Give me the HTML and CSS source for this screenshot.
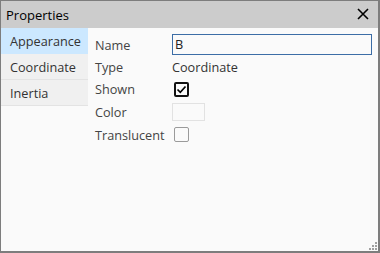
FILE: index.html
```html
<!DOCTYPE html>
<html>
<head>
<meta charset="utf-8">
<link rel="stylesheet" href="styles.css">
</head>
<body>
<div class="window">
  <div class="titlebar">
    <span class="title">Properties</span>
    <svg class="close" width="12" height="12" viewBox="0 0 12 12"><path d="M1 1 L11 11 M11 1 L1 11" stroke="#000" stroke-width="1.6" fill="none"/></svg>
  </div>
  <div class="main">
    <div class="tabs">
      <div class="tab selected">Appearance</div>
      <div class="tab">Coordinate</div>
      <div class="tab">Inertia</div>
    </div>
    <div class="content">
      <div class="grid">
        <div class="label">Name</div>
        <div class="value"><div class="input">B</div></div>
        <div class="label">Type</div>
        <div class="value">Coordinate</div>
        <div class="label">Shown</div>
        <div class="value"><span class="check on"><svg width="11" height="11" viewBox="0 0 11 11"><path d="M1.5 5.5 L4.3 8.3 L9.5 2.5" stroke="#000" stroke-width="1.7" fill="none"/></svg></span></div>
        <div class="label">Color</div>
        <div class="value"><span class="swatch"></span></div>
        <div class="label">Translucent</div>
        <div class="value"><span class="check off"></span></div>
      </div>
    </div>
  </div>
  <svg class="grip" width="9" height="9" viewBox="0 0 9 9">
    <rect x="7" y="1" width="2" height="2" fill="#a0a0a0"/>
    <rect x="4" y="4" width="2" height="2" fill="#a0a0a0"/>
    <rect x="7" y="4" width="2" height="2" fill="#a0a0a0"/>
    <rect x="1" y="7" width="2" height="2" fill="#a0a0a0"/>
    <rect x="4" y="7" width="2" height="2" fill="#a0a0a0"/>
    <rect x="7" y="7" width="2" height="2" fill="#a0a0a0"/>
  </svg>
</div>
</body>
</html>
```
FILE: styles.css
```css
html, body {
  margin: 0;
  padding: 0;
}
body {
  font-family: "Open Sans", "Noto Sans", sans-serif;
  font-size: 12.7px;
  color: #333;
}
.window {
  position: relative;
  width: 380px;
  height: 253px;
  box-sizing: border-box;
  border: 1px solid #7d7d7d;
  border-right-width: 2px;
  border-bottom-width: 2px;
  background: #fafafa;
  display: flex;
  flex-direction: column;
}
.titlebar {
  height: 27px;
  background: #cccccc;
  display: flex;
  align-items: center;
  justify-content: space-between;
  padding: 0 9px 0 5px;
  flex-shrink: 0;
}
.title {
  color: #000;
  font-size: 13px;
}
.close {
  display: block;
  margin-top: -2px;
}
.main {
  flex: 1;
  display: flex;
}
.tabs {
  width: 88px;
  display: flex;
  flex-direction: column;
}
.tab {
  height: 25px;
  line-height: 26px;
  padding-left: 9px;
  background: #f0f0f0;
  color: #333;
  border-bottom: 1px solid #e3e3e3;
}
.tab.selected {
  background: #cce8ff;
  border-bottom-color: #cce8ff;
}
.content {
  flex: 1;
  padding: 6px 6px 0 7px;
}
.grid {
  display: grid;
  grid-template-columns: 77px 200px;
  grid-template-rows: 21px 23px 22px 23px 23px;
  align-items: center;
}
.label {
  color: #444;
}
.value {
  display: flex;
  align-items: center;
}
.input {
  box-sizing: border-box;
  width: 200px;
  height: 21px;
  border: 1px solid #3c6da6;
  background: #fafafa;
  padding-left: 2px;
  line-height: 19px;
  color: #222;
}
.check {
  box-sizing: border-box;
  width: 15px;
  height: 15px;
  margin-left: 2px;
  border-radius: 2px;
  display: flex;
  align-items: center;
  justify-content: center;
}
.check.on {
  border: 2px solid #111;
}
.check.off {
  border: 1px solid #9a9a9a;
}
.swatch {
  box-sizing: border-box;
  width: 33px;
  height: 18px;
  border: 1px solid #e2e2e2;
  background: #fafafa;
}
.grip {
  position: absolute;
  right: 1px;
  bottom: 1px;
}
```
